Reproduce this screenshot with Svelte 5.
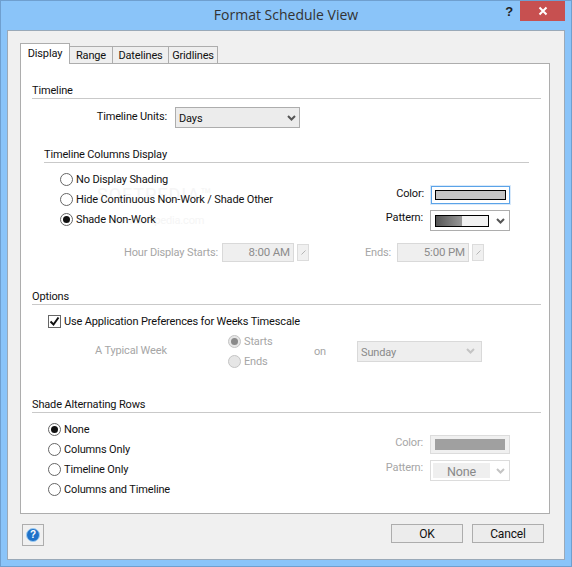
<script>
  const tabs = ['Display', 'Range', 'Datelines', 'Gridlines'];
  const shading = [
    { label: 'No Display Shading' },
    { label: 'Hide Continuous Non-Work / Shade Other' },
    { label: 'Shade Non-Work', on: true }
  ];
  const altRows = [
    { label: 'None', on: true },
    { label: 'Columns Only' },
    { label: 'Timeline Only' },
    { label: 'Columns and Timeline' }
  ];
</script>

{#snippet chevron()}
  <svg class="chev" viewBox="0 0 9 6" width="9" height="6"><path d="M1 1l3.5 3.5L8 1" fill="none" stroke="currentColor" stroke-width="2"/></svg>
{/snippet}

{#snippet spin()}
  <span class="spin"><svg viewBox="0 0 7 7" width="7" height="7"><path d="M1.5 5.5L5.5 1.5" stroke="#b5b5b5" fill="none"/></svg></span>
{/snippet}

<div class="window">
  <header class="titlebar">
    <span class="title">Format Schedule View</span>
    <span class="qmark">?</span>
    <span class="close">
      <svg viewBox="0 0 10 10" width="10" height="10"><path d="M1.5 1.5l7 7M8.5 1.5l-7 7" stroke="#fff" stroke-width="2" fill="none"/></svg>
    </span>
  </header>

  <div class="body">
    <div class="tabs">
      {#each tabs as t, i}
        <div class="tab" class:active={i === 0}>{t}</div>
      {/each}
    </div>

    <div class="panel">
      <div class="mark one">SOFTPEDIA™</div>
      <div class="mark two">www.softpedia.com</div>

      <div class="head first">Timeline</div>
      <div class="units">
        <span class="units-label">Timeline Units:</span>
        <div class="select units-select"><span>Days</span>{@render chevron()}</div>
      </div>

      <div class="head sub">Timeline Columns Display</div>
      <div class="group shade-group">
        <div class="radios">
          {#each shading as r}
            <div class="row"><span class="radio" class:on={r.on}></span>{r.label}</div>
          {/each}
        </div>
        <div class="side">
          <div class="side-row">
            <span>Color:</span>
            <div class="swatch-btn focus"><i class="swatch"></i></div>
          </div>
          <div class="side-row pat">
            <span>Pattern:</span>
            <div class="select pattern"><i class="grad"></i>{@render chevron()}</div>
          </div>
        </div>
      </div>

      <div class="hours">
        <span class="hour-label">Hour Display Starts:</span>
        <span class="time">8:00 AM</span>
        {@render spin()}
        <span class="ends-label">Ends:</span>
        <span class="time">5:00 PM</span>
        {@render spin()}
      </div>

      <div class="head options">Options</div>
      <div class="row check-row"><span class="check"><svg viewBox="0 0 11 11" width="11" height="11"><path d="M1.5 5.5l3 3 5-7" fill="none" stroke="#111" stroke-width="2"/></svg></span>Use Application Preferences for Weeks Timescale</div>
      <div class="week">
        <span class="week-label">A Typical Week</span>
        <div class="week-radios">
          <div class="row"><span class="radio on off"></span>Starts</div>
          <div class="row"><span class="radio off"></span>Ends</div>
        </div>
        <span class="on-label">on</span>
        <div class="select disabled day"><span>Sunday</span>{@render chevron()}</div>
      </div>

      <div class="head alt">Shade Alternating Rows</div>
      <div class="group alt-group">
        <div class="radios">
          {#each altRows as r}
            <div class="row"><span class="radio" class:on={r.on}></span>{r.label}</div>
          {/each}
        </div>
        <div class="side faded">
          <div class="side-row">
            <span>Color:</span>
            <div class="swatch-btn dim"><i class="swatch grey"></i></div>
          </div>
          <div class="side-row pat2">
            <span>Pattern:</span>
            <div class="select disabled pattern white"><b class="none">None</b>{@render chevron()}</div>
          </div>
        </div>
      </div>
    </div>

    <footer class="footer">
      <div class="help">
        <span class="help-ball">?</span>
      </div>
      <div class="actions">
        <div class="btn">OK</div>
        <div class="btn">Cancel</div>
      </div>
    </footer>
  </div>
</div>

<style>
  :global(body) {
    margin: 0;
    background: #8ac4f9;
  }
  .window {
    box-sizing: border-box;
    width: 572px;
    height: 567px;
    border: 1px solid #6f9fcf;
    background: #8ac4f9;
    padding: 0 6px 6px;
    display: flex;
    flex-direction: column;
    font-family: Roboto, "Liberation Sans", sans-serif;
    font-size: 11px;
    letter-spacing: -0.15px;
    color: #111;
  }
  .titlebar {
    height: 29px;
    flex: none;
    position: relative;
    display: flex;
    justify-content: center;
    align-items: center;
  }
  .title {
    font-family: "Open Sans", sans-serif;
    font-size: 14px;
    letter-spacing: 0;
    color: #333;
    padding-bottom: 2px;
  }
  .qmark {
    position: absolute;
    right: 52px;
    top: 3px;
    font: bold 13px "Liberation Sans", sans-serif;
    color: #222;
  }
  .close {
    position: absolute;
    right: 0;
    top: 0;
    width: 45px;
    height: 20px;
    background: #c75050;
    display: flex;
    align-items: center;
    justify-content: center;
  }
  .body {
    flex: 1;
    box-sizing: border-box;
    border: 1px solid #9aa9b8;
    background: #f0f0f0;
    padding: 12px 14px 0 12px;
  }
  .tabs {
    display: flex;
    align-items: flex-end;
    height: 20px;
  }
  .tab {
    box-sizing: border-box;
    height: 17px;
    line-height: 18px;
    border: 1px solid #adadad;
    border-bottom: 0;
    border-left: 0;
    background: #efefef;
    text-align: center;
  }
  .tab.active {
    height: 21px;
    line-height: 20px;
    border-left: 1px solid #adadad;
    background: #fff;
    width: 50px;
    margin-bottom: -1px;
    position: relative;
    z-index: 1;
  }
  .tab:nth-child(2) { width: 43px; }
  .tab:nth-child(3) { width: 56px; }
  .tab:nth-child(4) { width: 49px; }
  .panel {
    box-sizing: border-box;
    width: 530px;
    height: 451px;
    border: 1px solid #adadad;
    background: #fff;
    padding: 0 8px 0 11px;
    position: relative;
    isolation: isolate;
  }
  .head {
    height: 16px;
    line-height: 18px;
    border-bottom: 1px solid #c9c9c9;
  }
  .head.first { margin-top: 18px; }
  .head.sub { margin: 18px 12px 0 12px; }
  .head.options { margin-top: 26px; }
  .head.alt { margin-top: 25px; }
  .units {
    display: flex;
    align-items: center;
    margin-top: 8px;
    height: 21px;
  }
  .units-label {
    width: 135px;
    text-align: right;
    padding-bottom: 3px;
  }
  .select {
    box-sizing: border-box;
    border: 1px solid #adadad;
    height: 21px;
    background: #ececec;
    display: flex;
    align-items: center;
    justify-content: space-between;
    padding: 0 3px 0 3px;
    color: #111;
  }
  .select > span {
    padding-top: 2px;
  }
  .chev { color: #555; flex: none; }
  .units-select {
    width: 125px;
    margin-left: 8px;
  }
  .group {
    display: flex;
    justify-content: space-between;
  }
  .shade-group {
    margin-top: 6px;
    padding-left: 28px;
    padding-right: 31px;
    height: 60px;
  }
  .alt-group {
    margin-top: 6px;
    padding-left: 16px;
    padding-right: 31px;
  }
  .row {
    height: 20px;
    display: flex;
    align-items: center;
    white-space: pre;
  }
  .radio {
    box-sizing: border-box;
    width: 13px;
    height: 13px;
    border: 1px solid #666;
    border-radius: 50%;
    background: #fff;
    margin-right: 3px;
    flex: none;
    position: relative;
  }
  .radio.on::after {
    content: '';
    position: absolute;
    left: 2px;
    top: 2px;
    width: 7px;
    height: 7px;
    border-radius: 50%;
    background: #111;
  }
  .radio.off {
    border-color: #c4c4c4;
    background: #e6e6e6;
  }
  .radio.off.on::after { background: #8a8a8a; }
  .side {
    width: 142px;
  }
  .side-row {
    display: flex;
    justify-content: space-between;
    align-items: flex-start;
  }
  .shade-group .side { padding-top: 17px; }
  .alt-group .side { padding-top: 16px; }
  .side-row span {
    flex: 1;
    text-align: right;
    margin-right: 7px;
    line-height: 15px;
  }
  .swatch-btn {
    box-sizing: border-box;
    width: 79px;
    height: 18px;
    background: #f0f0f0;
    border: 1px solid #e3e3e3;
    display: flex;
    padding: 3px;
  }
  .swatch-btn.focus {
    border-color: #5ba3e8;
    background: #fff;
    outline: 1px solid #d8e9fa;
  }
  .swatch {
    flex: 1;
    background: #c4c4c4;
    border: 1px solid #000;
  }
  .swatch.grey {
    background: #a0a0a0;
    border: 0;
  }
  .swatch-btn.dim {
    width: 80px;
    height: 19px;
    border: 1px solid #dcdcdc;
    padding: 3px 4px;
  }
  .pat { margin-top: 6px; }
  .pat2 { margin-top: 6px; }
  .pattern {
    width: 80px;
    background: #fff;
    padding: 0 4px 0 4px;
  }
  .grad {
    width: 52px;
    height: 10px;
    border: 1px solid #000;
    background: linear-gradient(90deg, #555, #999 50%, #f2f2f2 51%, #f2f2f2);
  }
  .faded { color: #a6a6a6; }
  .hours {
    display: flex;
    align-items: center;
    margin-top: 13px;
    height: 20px;
    color: #a6a6a6;
  }
  .hour-label {
    width: 186px;
    text-align: right;
    margin-right: 4px;
  }
  .time {
    box-sizing: border-box;
    width: 72px;
    height: 19px;
    line-height: 17px;
    border: 1px solid #d9d9d9;
    background: #efefef;
    text-align: right;
    padding-right: 3px;
    color: #8c8c8c;
    font-size: 11.5px;
  }
  .spin {
    box-sizing: border-box;
    width: 12px;
    height: 17px;
    margin-left: 3px;
    border: 1px solid #dcdcdc;
    background: #f0f0f0;
    display: flex;
    align-items: center;
    justify-content: center;
  }
  .ends-label {
    width: 82px;
    text-align: right;
    margin-right: 6px;
  }
  .check-row {
    margin-top: 6px;
    padding-left: 16px;
  }
  .check {
    box-sizing: border-box;
    width: 13px;
    height: 13px;
    border: 1px solid #666;
    margin-right: 3px;
    display: flex;
  }
  .week {
    display: flex;
    align-items: center;
    height: 40px;
    color: #a6a6a6;
  }
  .week-label {
    width: 133px;
    padding-left: 63px;
    box-sizing: border-box;
    margin-right: 63px;
    padding-bottom: 2px;
    white-space: pre;
    flex: none;
  }
  .week-radios { width: 86px; }
  .on-label { width: 43px; }
  .day {
    width: 125px;
    background: #eee;
    border-color: #d9d9d9;
    color: #8a8a8a;
    padding-right: 6px;
  }
  .disabled .chev { color: #c4c4c4; }
  .white {
    background: #fff;
    border-color: #dcdcdc;
    padding: 0 4px 0 2px;
  }
  .none {
    font-weight: 400;
    width: 57px;
    height: 15px;
    line-height: 18px;
    background: #efefef;
    text-align: center;
    color: #888;
    font-size: 12.5px;
  }
  .mark {
    position: absolute;
    z-index: -1;
    color: #f5f5f5;
    pointer-events: none;
  }
  .mark.one {
    left: 76px;
    top: 120px;
    font-size: 18px;
    letter-spacing: 1px;
  }
  .mark.two {
    left: 88px;
    top: 150px;
    font-size: 11px;
  }
  .footer {
    display: flex;
    justify-content: space-between;
    padding: 10px 0 0 2px;
    width: 522px;
  }
  .help {
    box-sizing: border-box;
    width: 22px;
    height: 22px;
    border: 1px solid #adadad;
    display: flex;
    align-items: center;
    justify-content: center;
  }
  .help-ball {
    box-sizing: border-box;
    width: 14px;
    height: 14px;
    border-radius: 50%;
    background: #1f72c9;
    border: 1px solid #9ccbf2;
    color: #fff;
    font: bold 10px/12px "Liberation Sans", sans-serif;
    text-align: center;
  }
  .actions {
    display: flex;
    gap: 9px;
  }
  .btn {
    box-sizing: border-box;
    width: 72px;
    height: 19px;
    line-height: 19px;
    border: 1px solid #adadad;
    background: #ececec;
    text-align: center;
    font-size: 12px;
  }
</style>
